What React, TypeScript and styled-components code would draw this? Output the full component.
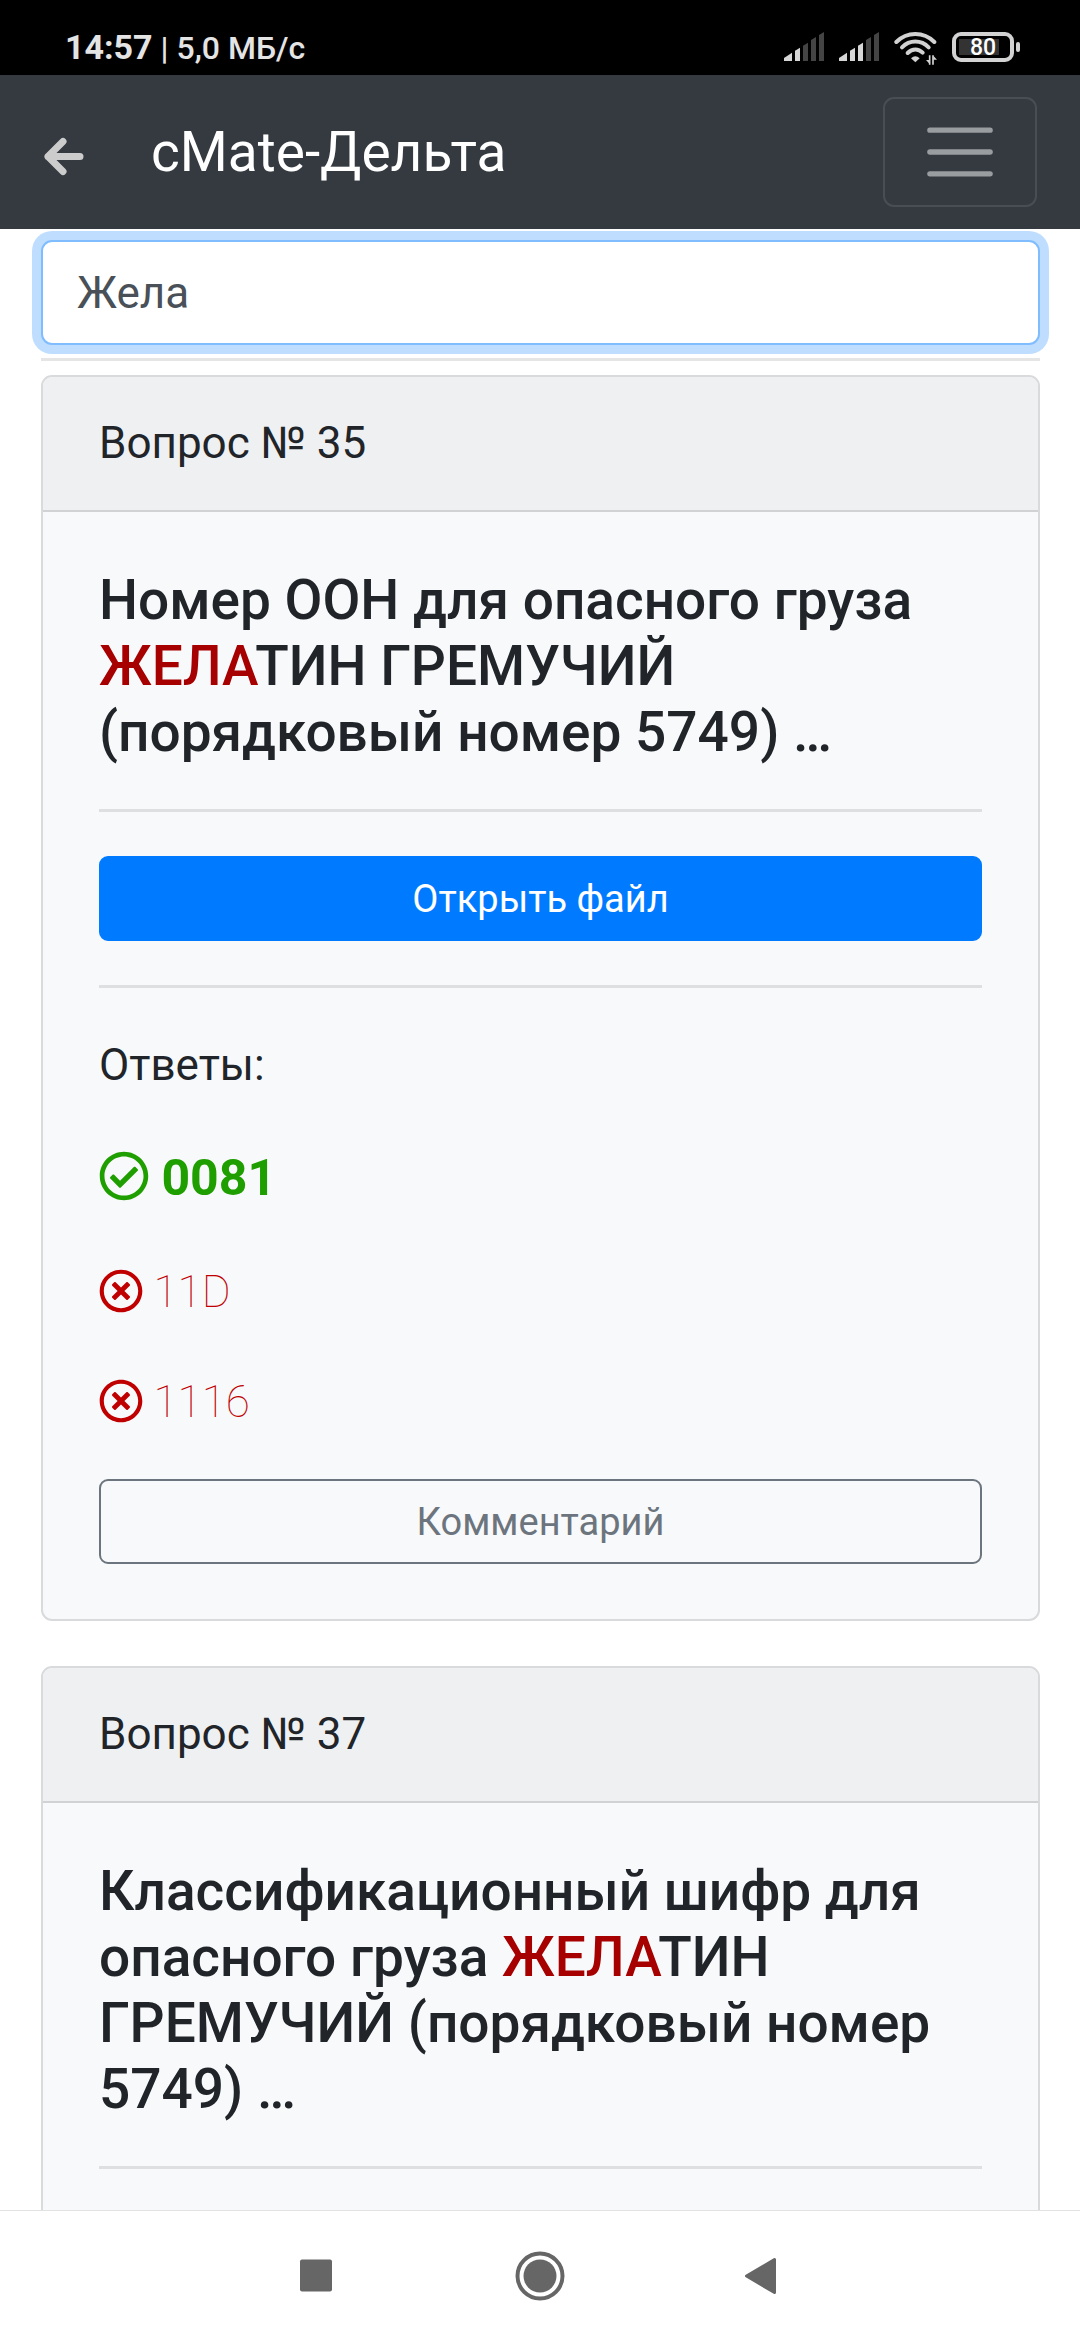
import React, { useState } from "react";
import styled, { createGlobalStyle } from "styled-components";
import { FaRegCheckCircle, FaRegTimesCircle } from "react-icons/fa";

const GlobalStyle = createGlobalStyle`
  *, *::before, *::after { box-sizing: border-box; }
  body {
    margin: 0;
    background: #fff;
    color: #212529;
    font-family: Roboto, "Noto Sans", sans-serif;
    font-size: 44px;
    line-height: 66px;
  }
  button, input { font-family: inherit; margin: 0; }
`;

const Screen = styled.div`
  display: flex;
  flex-direction: column;
  height: 100vh;
`;

const StatusBar = styled.div`
  display: flex;
  flex: none;
  align-items: flex-end;
  justify-content: space-between;
  height: 75px;
  padding: 0 60px 8px 65px;
  background: #000;
  color: #e4e4e4;
`;

const StatusText = styled.div`
  font-size: 32px;
  font-weight: 500;
  line-height: 38px;
`;

const Clock = styled.span`
  font-size: 34px;
  font-weight: 700;
`;

const StatusIcons = styled.div`
  display: flex;
  align-items: flex-start;
  gap: 15px;
  height: 35px;
`;

const BatteryWrap = styled.div`
  display: flex;
  align-items: center;
  gap: 2px;
`;

const BatteryBody = styled.div`
  display: flex;
  align-items: center;
  justify-content: center;
  width: 62px;
  height: 30px;
  padding-top: 2px;
  border: 4px solid #d2d2d2;
  border-radius: 9px;
  background: linear-gradient(#333, #333) 3px 3px / 40px 16px no-repeat;
  color: #fff;
  font-size: 23px;
  font-weight: 500;
  line-height: 20px;
`;

const BatteryTip = styled.div`
  width: 4px;
  height: 10px;
  border-radius: 2px;
  background: #d2d2d2;
`;

const NavBar = styled.header`
  display: flex;
  flex: none;
  align-items: center;
  height: 154px;
  padding: 0 43px;
  background: #343a40;
`;

const BackButton = styled.button`
  display: flex;
  padding: 8px 0 0;
  border: 0;
  background: none;
`;

const Brand = styled.h1`
  flex: 1;
  margin: 0 0 0 67px;
  color: #fff;
  font-size: 55px;
  font-weight: 400;
  line-height: 82px;
`;

const Toggler = styled.button`
  display: flex;
  align-items: center;
  justify-content: center;
  width: 154px;
  height: 110px;
  padding: 0;
  border: 2px solid rgba(255, 255, 255, 0.1);
  border-radius: 11px;
  background: none;
`;

const Main = styled.main`
  flex: 1;
  min-height: 0;
  overflow: hidden;
  padding: 11px 40px 0 41px;
`;

const SearchInput = styled.input`
  display: block;
  width: 100%;
  height: 105px;
  padding: 0 34px;
  border: 2px solid #80bdff;
  border-radius: 11px;
  outline: 0;
  background: #fff;
  box-shadow: 0 0 0 9px #bfdeff;
  color: #495057;
  font-size: 44px;
`;

const Rule = styled.hr<{ $top: number; $bottom: number }>`
  height: 3px;
  margin: ${(p) => p.$top}px 0 ${(p) => p.$bottom}px;
  border: 0;
  background: rgba(0, 0, 0, 0.1);
`;

const CardList = styled.div`
  display: flex;
  flex-direction: column;
  gap: 45px;
`;

const Card = styled.article`
  border: 2px solid #d8dadc;
  border-radius: 11px;
  background: #f8f9fb;
  overflow: hidden;
`;

const CardHeader = styled.div`
  padding: 33px 56px 34px;
  border-bottom: 2px solid #d1d2d4;
  background: #eff0f2;
`;

const CardBody = styled.div`
  padding: 55px 56px;
`;

const Question = styled.h2`
  margin: 0;
  font-size: 55px;
  font-weight: 500;
  line-height: 66px;
`;

const Match = styled.mark`
  background: none;
  color: #a60000;
`;

const BlockButton = styled.button<{ $primary?: boolean }>`
  display: block;
  width: 100%;
  height: 85px;
  padding: 0;
  border: 2px solid ${(p) => (p.$primary ? "#007bff" : "#6c757d")};
  border-radius: 9px;
  background: ${(p) => (p.$primary ? "#007bff" : "transparent")};
  color: ${(p) => (p.$primary ? "#fff" : "#6c757d")};
  font-size: 38px;
  line-height: 58px;
`;

const Answer = styled.p<{ $correct?: boolean }>`
  margin: 0 0 44px;
  color: ${(p) => (p.$correct ? "#1f9e00" : "#c00000")};
  font-size: ${(p) => (p.$correct ? 50 : 44)}px;
  font-weight: ${(p) => (p.$correct ? 700 : 100)};
  line-height: ${(p) => (p.$correct ? 73 : 66)}px;

  svg {
    vertical-align: -0.125em;
  }
`;

const AnswersLabel = styled.p`
  margin: 0 0 44px;
`;

const SystemNav = styled.nav`
  display: grid;
  flex: none;
  grid-template-columns: repeat(3, 222px);
  justify-content: center;
  height: 130px;
  border-top: 1px solid #e2e2e2;
  background: #fff;
`;

const SystemButton = styled.button`
  display: flex;
  align-items: center;
  justify-content: center;
  padding: 0;
  border: 0;
  background: none;
`;

function Signal({ level }: { level: number }) {
  const tops = [158, 143, 128, 111, 96];
  return (
    <svg width="40" height="29" viewBox="132 96 120 87" aria-hidden="true">
      {tops.map((top, i) => {
        const right = 156 + i * 24;
        const left = i === 0 ? 132 : right - 15;
        const shoulder = i === 0 ? 174 : top + 9;
        return (
          <path
            key={top}
            d={`M${left} 183V${shoulder}L${right} ${top}V183Z`}
            fill={i < level ? "#d6d6d6" : "#444"}
          />
        );
      })}
    </svg>
  );
}

function Wifi() {
  return (
    <svg width="43" height="33" viewBox="461 96 129 99" fill="none" stroke="#d2d2d2" aria-hidden="true">
      <g strokeWidth="12" strokeLinecap="round">
        <path d="M468 126C500 94 550 94 582 126" />
        <path d="M485 142C508 119 542 119 565 142" />
        <path d="M502 159C516 145 534 145 547 158" />
      </g>
      <path d="M512 175Q525 162 538 175L525 187Z" fill="#d2d2d2" stroke="none" />
      <path d="M568 166V194M578 194V166" strokeWidth="5" />
      <path d="M557 180L568 192V180ZM590 179L579 167V179Z" fill="#d2d2d2" stroke="none" />
    </svg>
  );
}

function Battery({ charge }: { charge: number }) {
  return (
    <BatteryWrap>
      <BatteryBody>{charge}</BatteryBody>
      <BatteryTip />
    </BatteryWrap>
  );
}

type QuestionCardProps = {
  number: number;
  title: React.ReactNode;
  children?: React.ReactNode;
};

function QuestionCard({ number, title, children }: QuestionCardProps) {
  return (
    <Card>
      <CardHeader>Вопрос № {number}</CardHeader>
      <CardBody>
        <Question>{title}</Question>
        <Rule $top={44} $bottom={44} />
        {children}
      </CardBody>
    </Card>
  );
}

export default function App() {
  const [query, setQuery] = useState("Жела");

  return (
    <Screen>
      <GlobalStyle />
      <StatusBar>
        <StatusText>
          <Clock>14:57</Clock> | 5,0 МБ/с
        </StatusText>
        <StatusIcons>
          <Signal level={2} />
          <Signal level={3} />
          <Wifi />
          <Battery charge={80} />
        </StatusIcons>
      </StatusBar>

      <NavBar>
        <BackButton aria-label="Назад">
          <svg width="41" height="39" viewBox="0 0 41 39" fill="none" stroke="#ccc" strokeWidth="7" strokeLinecap="round" strokeLinejoin="round">
            <path d="M37 19.500H5M20 4.500L5 19.500L20 34.500" />
          </svg>
        </BackButton>
        <Brand>cMate-Дельта</Brand>
        <Toggler aria-label="Меню">
          <svg width="82" height="82" viewBox="0 0 30 30" stroke="#fff" strokeOpacity="0.5" strokeWidth="2" strokeLinecap="round">
            <path d="M4 7h22M4 15h22M4 23h22" />
          </svg>
        </Toggler>
      </NavBar>

      <Main>
        <SearchInput
          type="text"
          aria-label="Поиск"
          value={query}
          onChange={(e) => setQuery(e.target.value)}
        />
        <Rule $top={13} $bottom={14} />
        <CardList>
          <QuestionCard
            number={35}
            title={
              <>
                Номер ООН для опасного груза <Match>ЖЕЛА</Match>ТИН ГРЕМУЧИЙ (порядковый номер 5749) …
              </>
            }
          >
            <BlockButton $primary>Открыть файл</BlockButton>
            <Rule $top={44} $bottom={44} />
            <AnswersLabel>Ответы:</AnswersLabel>
            <Answer $correct>
              <FaRegCheckCircle /> 0081
            </Answer>
            <Answer>
              <FaRegTimesCircle /> 11D
            </Answer>
            <Answer>
              <FaRegTimesCircle /> 1116
            </Answer>
            <BlockButton>Комментарий</BlockButton>
          </QuestionCard>
          <QuestionCard
            number={37}
            title={
              <>
                Классификационный шифр для опасного груза <Match>ЖЕЛА</Match>ТИН ГРЕМУЧИЙ (порядковый номер 5749) …
              </>
            }
          />
        </CardList>
      </Main>

      <SystemNav>
        <SystemButton aria-label="Недавние">
          <svg width="50" height="50" viewBox="0 0 50 50" fill="#666">
            <rect x="7" y="8.500" width="32" height="32" rx="2" />
          </svg>
        </SystemButton>
        <SystemButton aria-label="Домой">
          <svg width="50" height="50" viewBox="0 0 50 50">
            <circle cx="25" cy="25" r="22.500" fill="none" stroke="#666" strokeWidth="4" />
            <circle cx="25" cy="25" r="16.500" fill="#666" />
          </svg>
        </SystemButton>
        <SystemButton aria-label="Назад">
          <svg width="50" height="50" viewBox="0 0 50 50" fill="#666" stroke="#666" strokeWidth="3" strokeLinejoin="round">
            <path d="M37.500 8.500V41.500L9.500 25Z" />
          </svg>
        </SystemButton>
      </SystemNav>
    </Screen>
  );
}
